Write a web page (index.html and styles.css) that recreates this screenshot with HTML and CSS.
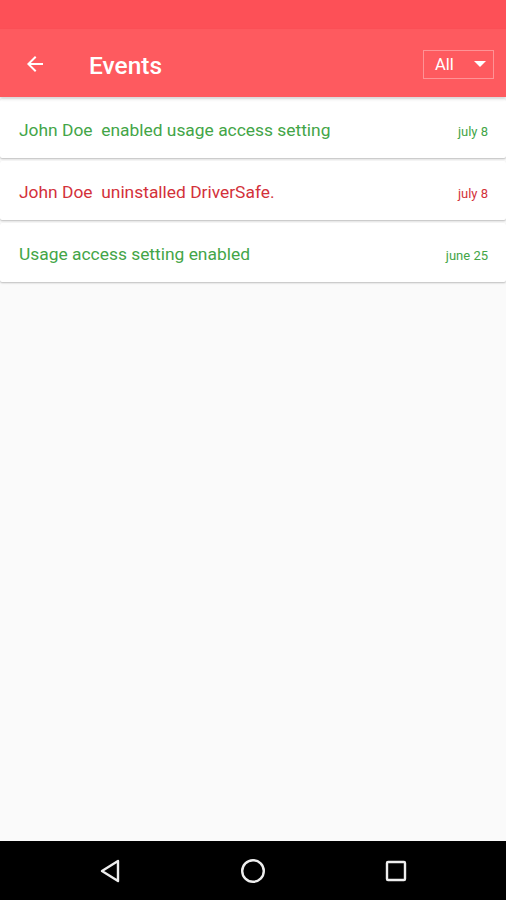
FILE: index.html
```html
<!DOCTYPE html>
<html lang="en">
<head>
  <meta charset="UTF-8" />
  <meta name="viewport" content="width=device-width, initial-scale=1.0"/>
  <title>Events</title>
  <link rel="stylesheet" href="styles.css">
</head>
<body>
  <div class="screen">
    <div class="status-bar"></div>
    <header class="app-bar">
      <svg class="back" width="24" height="24" viewBox="0 0 24 24">
        <path d="M20 11H7.83l5.59-5.59L12 4l-8 8 8 8 1.41-1.41L7.83 13H20v-2z" fill="#fff"/>
      </svg>
      <h1 class="title">Events</h1>
      <div class="filter">
        <span>All</span>
        <svg width="12" height="6" viewBox="0 0 12 6"><path d="M0 0h12L6 6z" fill="#fff"/></svg>
      </div>
    </header>

    <main class="list">
      <div class="card green">
        <span class="text">John Doe&nbsp; enabled usage access setting</span>
        <span class="date">july 8</span>
      </div>
      <div class="card red">
        <span class="text">John Doe&nbsp; uninstalled DriverSafe.</span>
        <span class="date">july 8</span>
      </div>
      <div class="card green">
        <span class="text">Usage access setting enabled</span>
        <span class="date">june 25</span>
      </div>
    </main>

    <nav class="nav-bar">
      <svg width="24" height="26" viewBox="0 0 24 26">
        <path d="M20 3L4 13l16 10z" fill="none" stroke="#eee" stroke-width="2.4" stroke-linejoin="round"/>
      </svg>
      <svg width="26" height="26" viewBox="0 0 26 26">
        <circle cx="13" cy="13" r="10.8" fill="none" stroke="#eee" stroke-width="2.4"/>
      </svg>
      <svg width="24" height="24" viewBox="0 0 24 24">
        <rect x="3" y="3" width="18" height="18" rx="1" fill="none" stroke="#eee" stroke-width="2.4"/>
      </svg>
    </nav>
  </div>
</body>
</html>
```

FILE: styles.css
```css
body {
  margin: 0;
  font-family: Roboto, "Noto Sans", sans-serif;
  background: #fafafa;
}

.screen {
  width: 506px;
  height: 900px;
  display: flex;
  flex-direction: column;
  background: #fafafa;
  overflow: hidden;
}

.status-bar {
  height: 29px;
  background: #fd5057;
}

.app-bar {
  height: 68px;
  box-sizing: border-box;
  background: #fe5a5f;
  display: flex;
  align-items: center;
  padding: 4px 12px 0 23px;
  box-shadow: 0 2px 3px rgba(0, 0, 0, 0.15);
  position: relative;
  z-index: 1;
}

.back {
  margin-top: -2px;
}

.title {
  margin: 0 0 0 42px;
  color: #fff;
  font-size: 24.5px;
  font-weight: 500;
  flex: 1;
}

.filter {
  width: 71px;
  height: 29px;
  box-sizing: border-box;
  border: 1px solid rgba(255, 255, 255, 0.35);
  display: flex;
  align-items: center;
  justify-content: space-between;
  padding: 0 7px 0 11px;
  color: #fff;
  font-size: 16.5px;
  margin-top: -2px;
}

.list {
  flex: 1;
  padding-top: 2px;
  display: flex;
  flex-direction: column;
  gap: 3px;
}

.card {
  height: 59px;
  box-sizing: border-box;
  padding: 3px 18px 0 19px;
  background: #fff;
  border-radius: 2px;
  box-shadow: 0 1px 2px rgba(0, 0, 0, 0.25);
  display: flex;
  align-items: center;
  justify-content: space-between;
}

.text {
  font-size: 17.4px;
}

.date {
  font-size: 13px;
  margin-top: 3px;
}

.green {
  color: #43a547;
}

.red {
  color: #d3313a;
}

.nav-bar {
  height: 59px;
  background: #000;
  display: flex;
  align-items: center;
  justify-content: center;
  gap: 118px;
}
```
